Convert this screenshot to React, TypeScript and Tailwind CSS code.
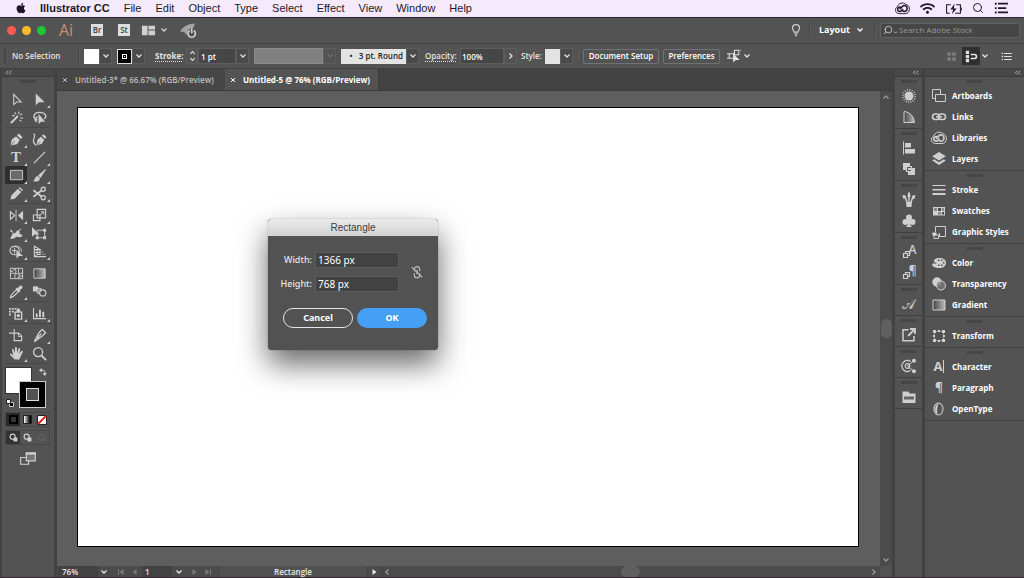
import type { ReactNode } from "react";
import { FaApple, FaWifi } from "react-icons/fa";
import { Search } from "lucide-react";

const line = { fill: "none", stroke: "currentColor" };

const icons: Record<string, ReactNode> = {
  select: <path d="M5 2.5v11l3-2.800h5z" {...line} strokeWidth="1.100" />,
  direct: <path d="M4 1.500v12.500l3.500-3.200h6z" />,
  wand: (
    <>
      <path d="M2 14 9.500 6.500" {...line} strokeWidth="2.200" />
      <path d="M10.500 1.500v3M14 4l-2 1.500M15 8.500h-3M6 2.500l1.500 2M13 12l-1.500-1.500M3.500 6h2.500" {...line} strokeWidth="1.200" />
    </>
  ),
  lasso: (
    <>
      <path d="M6 10.500C0 10 1 2.500 8 2.500s8 5 5 7M6 7.500c-2.500 0-3.500 4.500-1 5" {...line} strokeWidth="1.500" />
      <path d="M7 4v11l2.700-2.600H14z" />
    </>
  ),
  pen: (
    <>
      <path d="M1.500 14.500 3 8 7.500 4.500l4 4L8.500 13z" />
      <path d="M8.500 3.500 10.500 1.500l4 4L12.500 7.500z" />
      <path d="M2 14 6 10" stroke="#535353" strokeWidth=".8" />
    </>
  ),
  curve: (
    <>
      <path d="M4.500 14.500 6 8 9.500 5l3.500 3.500L10.500 12.500z" />
      <path d="M10.500 4 12.200 2.300l3.300 3.300L13.800 7.300z" />
      <path d="M1.500 2c3 1 0 4.500 0 7s1 4 3 5" {...line} strokeWidth="1.300" />
      <path d="M5 14 8.500 10.500" stroke="#535353" strokeWidth=".8" />
    </>
  ),
  segment: <path d="M2 14 14 2" {...line} strokeWidth="1.300" />,
  rect: <path d="M1.500 2.500h13v10h-13z" stroke="currentColor" fill="#6a6a6a" />,
  brush: (
    <>
      <path d="M14.500 1.500 7 8l2 2z" stroke="currentColor" />
      <path d="M6.200 8.500 8.500 10.800C8 14.500 4.500 15 1 14.200c2.500-1 1.500-5.200 5.200-5.700z" />
    </>
  ),
  pencil: <path d="m1.500 14.500 1-4.500 7-7 3.500 3.500-7 7zM10.500 2l1-1 3.500 3.500-1 1z" />,
  scissors: (
    <>
      <circle cx="12" cy="3.500" r="2.200" {...line} strokeWidth="1.400" />
      <circle cx="12" cy="12.500" r="2.200" {...line} strokeWidth="1.400" />
      <path d="M10.500 11.500 1.500 4.500M10.500 4.500l-9 7" {...line} strokeWidth="1.800" />
    </>
  ),
  reflect: (
    <>
      <path d="M1.500 4v8l4.500-4z" {...line} strokeWidth="1.200" />
      <path d="M15 3v10L9.500 8z" />
      <path d="M7.500 2v12" {...line} />
    </>
  ),
  scale: (
    <>
      <path d="M5.500 1.500h9v9h-9zM1.500 7.500h7v6h-7z" {...line} strokeWidth="1.200" />
      <path d="M8 8 12.500 4M9.500 4h3v3" {...line} />
    </>
  ),
  width: (
    <>
      <path d="M1.500 4c3 0 2 4 4 4s3-5 5-3-1 4 3.500 4v2c-4 2.500-5-1-7 1s-4.500 2-6 1c2-1 1.500-3 2.500-4S4 6 1.500 6z" />
      <path d="M2 12 13 3" stroke="currentColor" />
    </>
  ),
  free: (
    <>
      <path d="M5.500 4.500h8v8h-8z" {...line} />
      <path d="M12 3h3v3h-3zM12 11h3v3h-3zM4 11h3v3H4z" />
      <path d="M0 1v10.500L3 9h5z" />
    </>
  ),
  shape: (
    <>
      <ellipse cx="6" cy="7" rx="5" ry="4.500" {...line} strokeWidth="1.200" />
      <path d="M6 2.500c4.500-1 8 2 7 6M3 7h5M6 4v6" {...line} />
      <path d="M8 6v9.500l2.700-2.600H15z" />
    </>
  ),
  perspective: (
    <>
      <path d="M2.500 1.500v12H15M2.500 2.500 8.500 6v5l-6 1M2.500 6h6M2.500 9h6M5.500 4v8" {...line} strokeWidth="1.200" />
      <path d="M9 8.500h3M9 11h5M9 6h2" {...line} strokeDasharray="1 1" />
    </>
  ),
  mesh: <path d="M1.500 2.500h13v11h-13zM1.500 9c4-4 7 2 13-2M6 2.500c4 4-2 7 1 11M10.500 2.500c-2 4 2 7 0 11M1.500 6c3 0 4-2 5-3.500M9 13.500c1-2 3-3 5.500-3" {...line} />,
  gradient: <path d="M2 3h12v10H2z" fill="url(#ramp)" stroke="currentColor" />,
  eyedropper: (
    <>
      <path d="M1.500 14.500c0-2 1-3.500 6.500-8.500L10 8c-5 5.500-6.500 6.500-8.500 6.500z" {...line} strokeWidth="1.200" />
      <path d="m7 5 4 4 1.200-1.200-.7-.8L14 4.500C15.500 2.500 13 .5 11.500 2L9 4.500l-.8-.7z" />
    </>
  ),
  blend: (
    <>
      <path d="M1 2.500h5.500v5.500H1z" />
      <circle cx="8" cy="7.500" r="3" fill="#999" stroke="currentColor" />
      <circle cx="11.500" cy="9.500" r="3.300" fill="#535353" stroke="currentColor" strokeWidth="1.200" />
    </>
  ),
  spray: (
    <>
      <path d="M0 2h2v2H0zM3 2h2v2H3zM6 2h2v2H6zM0 5h2v2H0zM3 5h2v2H3zM0 8h2v2H0z" />
      <path d="M6.500 6.500h7v7.500h-7zM8 5h4M8.500 3.500h3" {...line} strokeWidth="1.500" />
      <circle cx="10" cy="10.200" r="1.800" />
    </>
  ),
  graph: <path d="M1 2h1.200v10.800H15V14H1zM4 8h2v4H4zM7.500 4h2v8h-2zM11 6h2v6h-2z" />,
  artboardTool: (
    <>
      <path d="M5.500 1v4M0 5.500h5M5.500 5.500h5l3 3v5h-8z" {...line} strokeWidth="1.200" />
      <path d="M10 5.500v3.500h3.500" {...line} />
    </>
  ),
  slice: <path d="M2.500 14.500 7.500 5 11 1.500 14.500 5 11 8.500zM5.500 11l4.500-5" {...line} strokeWidth="1.400" />,
  hand: <path d="M6 14.500 1.300 9.700c-.9-1.200.6-2 1.500-1.200L4.500 9.800 3.300 4.500c-.3-1.400 1.400-1.700 1.800-.4l1.100 3.400L6.400 2.200c0-1.400 1.900-1.400 2 0l.2 5.200 1.500-4.400c.5-1.300 2-.8 1.800.4l-1 4.900 2.100-2.600c1-1.100 2.200-.2 1.600.9L12.500 11 11 14.500z" />,
  zoom: (
    <>
      <circle cx="6.500" cy="6.500" r="4.800" {...line} strokeWidth="1.400" />
      <path d="m10 10 5 5" stroke="currentColor" strokeWidth="2" />
    </>
  ),
  sun: (
    <>
      <circle cx="8" cy="8" r="4.500" />
      <circle cx="8" cy="8" r="6.200" {...line} strokeWidth="1.500" strokeDasharray="1 1.400" />
    </>
  ),
  guide: <path d="M3 2.500C9 3 13 7.500 13.500 13.500H3z" fill="url(#ramp)" stroke="currentColor" />,
  align: <path d="M2 1.500h1v13H2zM4 3h6v4.500H4zM4 9h10v4.500H4z" />,
  pathfinder: (
    <>
      <path d="M2 2h7v3H5v4H2z" />
      <path d="M7 7h7v7H7V11h3V9H7z" />
      <path d="M5.500 5.500h5v5h-5z" {...line} strokeWidth="1.200" />
    </>
  ),
  brushes: (
    <>
      <path d="M6 10 4 5M8 9V3M10 10l2-5" stroke="currentColor" strokeWidth="1.500" />
      <path d="M2 6.500 1.500 3l3 .5 1 3zM6.500 5 7 .500h2L9.500 5zM10.500 6.500l1-3 3-.5-1 4z" />
      <path d="M5 9.500h6l-.5 5.500h-5z" />
    </>
  ),
  club: (
    <>
      <circle cx="8" cy="4.500" r="3" />
      <circle cx="4.500" cy="9" r="3" />
      <circle cx="11.500" cy="9" r="3" />
      <path d="M7 7h2l.2 5 2 2H4.800l2-2z" />
    </>
  ),
  styleBox: <path d="M2.500 9.500h4v4h-4zM4.500 9V7.500h4v4H7" {...line} strokeWidth="1.200" />,
  share: (
    <>
      <path d="M7.500 2.700H2v11h11V9" {...line} strokeWidth="1.500" />
      <path d="m7 9 6.500-6.500M9 2h5v5" {...line} strokeWidth="1.800" />
    </>
  ),
  target: (
    <>
      <path d="M9.500 3.500a5.500 5.500 0 1 0 0 9" {...line} strokeWidth="1.400" />
      <circle cx="6.500" cy="8" r="2.300" {...line} strokeWidth="1.200" />
      <path d="M6.500 8 13 2.500M6.500 8l6.500 5.500" stroke="currentColor" />
      <circle cx="13" cy="2.800" r="2" />
      <circle cx="13" cy="13.200" r="2" />
    </>
  ),
  folder: (
    <>
      <path d="M1.500 2.500h6l1 2h6v9.500h-13z" />
      <path d="M3 7.500h10v3H3z" fill="#666" />
    </>
  ),
  artboards: (
    <>
      <path d="M1.500 1.500h8v9h-8z" {...line} />
      <path d="M4.500 6.500h10v7h-10z" fill="#535353" stroke="currentColor" />
    </>
  ),
  links: (
    <>
      <rect x="1.500" y="5" width="7" height="5.500" rx="2.700" {...line} strokeWidth="1.600" />
      <rect x="7.500" y="5" width="7" height="5.500" rx="2.700" {...line} strokeWidth="1.600" />
      <path d="M5 7.800h6" stroke="currentColor" strokeWidth="1.500" />
    </>
  ),
  cloud: (
    <>
      <path d="M4.500 13.500C-.5 13-.5 7.500 2.500 6.500 3.500 2 9 1 11.500 3.500c5.500 1 5 10-.5 10z" {...line} />
      <path d="M8 10.200c1.500 1.800 5 1 5-2.200s-3.500-4-5.200-2.200L5 8.800" {...line} strokeWidth="1.700" />
      <path d="M8.500 8.500 6.800 10.600c-1.300 1.100-4 .6-4-1.600S5 6 6.500 7" {...line} strokeWidth="1.700" />
    </>
  ),
  layers: (
    <>
      <path d="m8 1 6.800 4.200L8 9.500 1.200 5.200z" />
      <path d="m1.200 9.500 2-1.300L8 11.200l4.800-3 2 1.300L8 14z" />
    </>
  ),
  strokes: <path d="M1.500 3h13v1h-13zM1.500 7h13v1.500h-13zM1.500 11h13v2h-13z" />,
  swatches: (
    <>
      <path d="M2 4h12v8.500H2z" />
      <path d="M3 5h3v3H3zM7 9h3v2.500H7zM11 5h2v3h-2z" fill="#888" />
      <path d="M7 5h3v3H7zM11 9h2v2.500h-2z" fill="#4a4a4a" />
    </>
  ),
  styles: (
    <>
      <path d="M4.500 8V2.500h10v10H8" {...line} />
      <path d="M1.500 8.500h4v3h-4z" fill="#ddd" />
      <path d="M3 11h4.500v3.500H3zM8.500 9v4" {...line} />
    </>
  ),
  palette: (
    <>
      <path d="M8.500 3c4 0 6.500 1.800 6.500 4.900 0 3-3 5.100-6.500 5.100C4 13 1 11.500 1.200 9.500 1.800 7.500 5 9.500 5.500 8.500 6 7.500 2 7.500 3 5.500 3.800 3.500 6 3 8.500 3z" />
      <path d="M7 4.500h1.500V6H7zM10 4.500h1.500V6H10zM12 7h1.500v1.500H12zM10 9.500h1.500V11H10zM7 9.500h1.500V11H7z" fill="#535353" />
    </>
  ),
  transparency: (
    <>
      <circle cx="6" cy="6" r="4.700" />
      <circle cx="10" cy="9.500" r="4.500" fill="#777" fillOpacity=".8" stroke="currentColor" />
    </>
  ),
  transform: (
    <>
      <path d="M3.500 3.500h9v9h-9z" {...line} strokeDasharray="1 1" />
      <path d="M2 2h3v3H2zM11 2h3v3h-3zM2 11h3v3H2zM11 11h3v3h-3zM7 2h2v2H7zM7 12h2v2H7zM2 7h2v2H2zM12 7h2v2h-2z" />
    </>
  ),
  opentype: (
    <>
      <ellipse cx="7.500" cy="8" rx="4.500" ry="6" {...line} strokeWidth="1.200" />
      <path d="M8 2.500C3 4 3 12 7 13.500 5.500 11 6 5 8 2.500z" />
      <path d="M9 2.500c2.500 3 2 8 0 11 4-2 4-9.500 0-11z" fill="#909090" />
    </>
  ),
  arrange: <path d="M1 3h6v10H1zM8 3h7v4H8zM8 8h7v5H8z" />,
  rocket: (
    <>
      <path d="M0 9C4 3 9 2 14 1.500 13 5 11 9 6 12L4 9.500z" fill="#a5a5a5" />
      <circle cx="11" cy="10.500" r="4.500" fill="#535353" />
      <path d="M9 8a3.500 3.500 0 1 0 4 0M11 6v4.500" {...line} strokeWidth="1.600" />
    </>
  ),
  bulb: <path d="M6 10.500C6 9 4 8.500 4 5.800a4 4 0 0 1 8 0C12 8.500 10 9 10 10.500zM6.200 12.500h3.600M7 14.500h2" {...line} strokeWidth="1.400" />,
  isolate: (
    <>
      <path d="M2.500 5.500h6v5h-6zM8.500 1.500h5v5h-5zM0 5.500h2M0 10.500h7M15 1.500h1" {...line} strokeWidth="1.200" />
      <path d="M7 5v10.500l3-2.800h4.500z" />
    </>
  ),
  grid4: <path d="M2 2h5v5H2zM9 2h5v5H9zM2 9h5v5H2zM9 9h5v5H9z" />,
  dock: (
    <>
      <path d="M1 1h4v4H1zM1 6h4v4H1zM1 11h4v4H1z" />
      <path d="M7 5.500h4.500c3.500 0 3.500 5 0 5H7" {...line} strokeWidth="2" />
    </>
  ),
  list: <path d="M1 2.500h2v2H1zM1 7h2v2H1zM1 11.500h2v2H1zM4.500 3h11v1.300h-11zM4.500 7.300h11v1.300h-11zM4.500 11.700h11V13h-11z" />,
  menuList: <path d="M1 2h2v2.200H1zM1 7h2v2.200H1zM1 12h2v2.200H1zM4.500 2H16v2H4.500zM4.500 7H14v2H4.500zM4.500 12H16v2H4.500z" />,
  screens: (
    <>
      <path d="M1.500 7.500h7v6h-7z" {...line} />
      <path d="M6.500 3.500h8v7h-8z" fill="#777" stroke="currentColor" />
      <path d="M6 3h9v2H6z" />
    </>
  ),
  drawMode: (
    <>
      <circle cx="6.500" cy="6.500" r="4.500" {...line} strokeWidth="2" />
      <path d="M8 8h7v7H8z" />
    </>
  ),
  drawInside: <circle cx="8" cy="8" r="5" {...line} strokeWidth="1.500" strokeDasharray="2 1" />,
  swap: (
    <>
      <path d="M4 4.500h4c2.500 0 3.500 1 3.500 3.500v4" {...line} strokeWidth="2" />
      <path d="M0 4.500 5.500 0v9zM11.500 16 7 10.500h9z" />
    </>
  ),
  battery: (
    <>
      <path d="M5.500 4.500H1.500v8h3M10.500 4.500h4v8H9.500M15.800 7v3" {...line} />
      <path d="M9 3.500 5 9h2.700L6.500 13.500 11 8H8.300z" />
    </>
  ),
  unlink: (
    <>
      <path d="M5 7V4.500C5 1 11 1 11 4.500V7M5 9.500V12c0 3.500 6 3.500 6 0V9.500M8 5.500v5" {...line} strokeWidth="1.300" />
      <path d="M2 2.500 14 14" {...line} strokeWidth="1.300" />
    </>
  ),
};

function Icon({ name, className = "size-4" }: { name: string; className?: string }) {
  return (
    <svg viewBox="0 0 16 16" fill="currentColor" className={`shrink-0 ${className}`} aria-hidden="true">
      {icons[name]}
    </svg>
  );
}

function Chevron({ className = "size-2" }: { className?: string }) {
  return (
    <svg viewBox="0 0 8 8" className={`shrink-0 ${className}`} aria-hidden="true">
      <path d="m1.500 2.500 2.500 2.500 2.500-2.500" fill="none" stroke="currentColor" strokeWidth="1.300" />
    </svg>
  );
}

function DropButton({ label, muted = false }: { label: string; muted?: boolean }) {
  return (
    <button
      aria-label={label}
      className={`flex h-4 w-[13px] shrink-0 items-center justify-center border border-[#5d5d5d] ${muted ? "text-[#6d6d6d]" : "bg-[#4a4a4a] text-[#e0e0e0]"}`}
    >
      <Chevron />
    </button>
  );
}

function Divider() {
  return <span className="h-4 w-[2px] shrink-0 border-r border-[#5c5c5c] bg-[#474747]" />;
}

const menus = ["File", "Edit", "Object", "Type", "Select", "Effect", "View", "Window", "Help"];

function MenuBar() {
  return (
    <nav className="flex h-[17px] shrink-0 items-center bg-[#f5eafb] pr-4 pb-px pl-[15px] font-['Liberation_Sans',sans-serif] text-[11px] leading-[14px] text-[#1d1826]">
      <FaApple className="mr-[13px] size-3" />
      <div className="flex gap-[14px]">
        <button className="font-bold">Illustrator CC</button>
        {menus.map((m) => (
          <button key={m}>{m}</button>
        ))}
      </div>
      <div className="ml-auto flex items-center gap-[10px]">
        <Icon name="cloud" className="size-[15px]" />
        <FaWifi className="size-[15px]" />
        <Icon name="battery" className="size-[17px]" />
        <Search className="size-3" />
        <Icon name="menuList" className="size-[14px]" />
      </div>
    </nav>
  );
}

function TitleBar() {
  return (
    <header className="flex h-[27px] shrink-0 items-center border-t border-b border-t-[#30263a] border-b-[#424242] pr-1 pb-px pl-[7px] text-[#d0d0d0]">
      <div className="flex gap-[6px]">
        <button aria-label="Close" className="size-[9px] rounded-full bg-[#fb5a52]" />
        <button aria-label="Minimize" className="size-[9px] rounded-full bg-[#fdb92a]" />
        <button aria-label="Full screen" className="size-[9px] rounded-full bg-[#1ec736]" />
      </div>
      <span className="ml-[13px] w-8 text-[16px] leading-4 text-[#c98f6d]">Ai</span>
      <div className="flex items-center gap-[15px] text-[8px] leading-3 font-semibold text-[#444]">
        <button className="size-3 bg-[#dedede]">Br</button>
        <button className="size-3 bg-[#dedede]">St</button>
      </div>
      <button aria-label="Arrange documents" className="ml-[11px] flex items-center gap-1">
        <Icon name="arrange" className="size-[15px]" />
        <Chevron />
      </button>
      <button aria-label="GPU performance" className="ml-3">
        <Icon name="rocket" className="size-[17px]" />
      </button>
      <div className="ml-auto flex items-center">
        <button aria-label="Learn" className="mr-[6px]">
          <Icon name="bulb" className="size-[14px]" />
        </button>
        <Divider />
        <button className="mr-[10px] ml-2 flex items-center gap-[6px] text-[9px] leading-3 font-bold text-white">
          Layout
          <Chevron />
        </button>
        <Divider />
        <label className="ml-1 flex h-[15px] w-[140px] items-center rounded-[2px] border border-[#616161] bg-[#464646] pl-[2px]">
          <Search className="size-[10px] shrink-0 -scale-x-100" />
          <Chevron className="mt-1 size-[5px]" />
          <input
            aria-label="Search Adobe Stock"
            placeholder="Search Adobe Stock"
            className="w-full min-w-0 bg-transparent pl-px text-[8px] leading-3 outline-none placeholder:text-[#969696]"
          />
        </label>
      </div>
    </header>
  );
}

function ControlBar() {
  return (
    <div className="flex h-[25px] shrink-0 items-center border-b border-[#424242] pr-3 pl-1 text-[8px] leading-3 text-[#e2e2e2]">
      <span className="h-4 w-[2px] bg-[#474747]" />
      <span className="ml-[6px] w-[66px] font-semibold">No Selection</span>
      <Divider />
      <button aria-label="Fill" className="ml-1 size-[15px] bg-white" />
      <DropButton label="Fill options" />
      <button aria-label="Stroke color" className="ml-[5px] flex size-[15px] items-center justify-center border border-[#ddd] bg-black">
        <span className="flex size-[5px] items-center justify-center border border-white">
          <span className="size-px bg-white" />
        </span>
      </button>
      <DropButton label="Stroke options" />
      <label htmlFor="stroke" className="ml-[10px] w-[31px] font-bold underline decoration-dotted underline-offset-2">Stroke:</label>
      <button aria-label="Stroke weight step" className="flex h-4 w-3 flex-col items-center justify-center border border-[#5d5d5d]">
        <Chevron className="size-[7px] rotate-180" />
        <Chevron className="size-[7px]" />
      </button>
      <input id="stroke" defaultValue="1 pt" className="h-4 w-[38px] border border-[#5d5d5d] bg-[#464646] pl-[2px] font-semibold text-white" />
      <DropButton label="Stroke weights" />
      <button aria-label="Variable width profile" className="ml-[5px] h-4 w-[69px] border border-[#8a8a8a] bg-[#7f7f7f]" />
      <DropButton label="Width profiles" muted />
      <select aria-label="Brush" className="ml-[5px] h-[15px] w-[65px] appearance-none bg-[#e3e3e3] pr-[3px] text-right font-semibold text-[#222]">
        <option>•&nbsp;&nbsp; 3 pt. Round</option>
      </select>
      <DropButton label="Brushes" />
      <label htmlFor="opacity" className="ml-[6px] w-[35px] font-semibold underline decoration-dotted underline-offset-2">Opacity:</label>
      <input id="opacity" defaultValue="100%" className="h-4 w-[44px] border border-[#5d5d5d] bg-[#464646] pl-px font-semibold text-white" />
      <button aria-label="Opacity slider" className="flex h-4 w-[13px] items-center justify-center border border-[#5d5d5d]">
        <Chevron className="size-2 -rotate-90" />
      </button>
      <span className="ml-1 w-6 font-semibold">Style:</span>
      <button aria-label="Graphic style" className="size-[15px] bg-[#e3e3e3]" />
      <DropButton label="Graphic styles" />
      <span className="ml-[5px]"><Divider /></span>
      <button className="ml-1 h-[15px] w-[76px] shrink-0 rounded-[2px] border border-[#727272] font-semibold whitespace-nowrap text-white">Document Setup</button>
      <button className="ml-1 h-[15px] w-[57px] shrink-0 rounded-[2px] border border-[#727272] font-semibold text-white">Preferences</button>
      <button aria-label="Select similar objects" className="ml-[7px] flex items-center gap-[2px]">
        <Icon name="isolate" className="size-[14px]" />
        <Chevron />
      </button>
      <div className="ml-auto flex items-center">
        <button aria-label="Grid" className="mr-[5px] text-[#7d7d7d]"><Icon name="grid4" className="size-[11px]" /></button>
        <button aria-label="Dock" className="flex h-[18px] w-[18px] items-center justify-center bg-[#2f2f2f]"><Icon name="dock" className="size-[13px]" /></button>
        <Chevron className="ml-px size-2" />
        <button aria-label="Panel menu" className="ml-3"><Icon name="list" className="size-[11px]" /></button>
      </div>
    </div>
  );
}

const toolGroups = [
  ["select", "direct", "wand", "lasso"],
  ["pen", "curve", "type", "segment", "rect", "brush", "pencil", "scissors"],
  ["reflect", "scale", "width", "free", "shape", "perspective"],
  ["mesh", "gradient", "eyedropper", "blend"],
  ["spray", "graph"],
  ["artboardTool", "slice", "hand", "zoom"],
];
const singleTools = ["select", "wand", "lasso", "curve", "free", "mesh", "gradient", "blend", "artboardTool", "zoom"];

function Tool({ name }: { name: string }) {
  return (
    <button
      aria-label={name}
      className={`relative flex h-[18px] w-[22px] items-center justify-center ${name === "rect" ? "rounded-[2px] bg-[#2f2f2f]" : ""}`}
    >
      {name === "type" ? (
        <span className="font-['Liberation_Serif',serif] text-[15px] leading-4 font-bold">T</span>
      ) : (
        <Icon name={name} className="size-[15px]" />
      )}
      {!singleTools.includes(name) && (
        <span className="absolute right-0 bottom-0 size-0 border-b-[3px] border-l-[3px] border-b-[#d0d0d0] border-l-transparent" />
      )}
    </button>
  );
}

function Collapse() {
  return (
    <svg viewBox="0 0 8 8" className="size-[7px] text-[#c4c4c4]" aria-hidden="true">
      <path d="M3.500 2 1.500 4l2 2M7 2 5 4l2 2" fill="none" stroke="currentColor" />
    </svg>
  );
}

function PanelHeader({ className = "" }: { className?: string }) {
  return (
    <div className={`flex h-2 shrink-0 items-center border-b border-[#3c3c3c] bg-[#484848] px-[3px] ${className}`}>
      <Collapse />
    </div>
  );
}

function Grip({ className = "" }: { className?: string }) {
  return <div className={`h-[3px] w-4 bg-[repeating-linear-gradient(90deg,#414141_0_1px,#4b4b4b_1px_2px)] ${className}`} />;
}

function Toolbar() {
  return (
    <aside className="flex w-[52px] shrink-0 flex-col bg-[#535353] text-[#cfcfcf]">
      <PanelHeader />
      <Grip className="mx-auto mt-[3px] mb-1" />
      {toolGroups.map((group, i) => (
        <div
          key={i}
          className={`mx-[3px] mb-px grid grid-cols-2 border-t pt-[2px] ${i === 0 ? "border-transparent" : "border-[#484848]"}`}
        >
          {group.map((t) => (
            <Tool key={t} name={t} />
          ))}
        </div>
      ))}
      <div className="relative mx-[3px] h-[46px] border-t border-[#484848]">
        <button aria-label="Fill color" className="absolute top-[3px] left-0 size-[27px] border border-[#333] bg-white" />
        <button aria-label="Stroke swatch" className="absolute top-[17px] left-[14px] flex size-[27px] items-center justify-center border border-[#ccc] bg-black">
          <span className="size-[13px] border border-[#ddd] bg-[#535353]" />
        </button>
        <button aria-label="Swap fill and stroke" className="absolute top-[4px] left-[34px]">
          <Icon name="swap" className="size-2" />
        </button>
        <button aria-label="Default fill and stroke" className="absolute top-[35px] left-[1px]">
          <svg viewBox="0 0 8 8" className="size-2">
            <path d="M3.500 3.500h4v4h-4z" fill="#000" stroke="#ccc" />
            <path d="M.5.5h4v4h-4z" fill="#fff" stroke="#222" />
          </svg>
        </button>
      </div>
      <div className="mx-[3px] mt-[3px] grid w-[45px] grid-cols-3 border border-[#484848]">
        <button aria-label="Color" className="flex h-[13px] items-center justify-center bg-[#2a2a2a]">
          <span className="size-[9px] border-2 border-black bg-[#333]" />
        </button>
        <button aria-label="Gradient fill" className="flex h-[13px] items-center justify-center">
          <span className="size-[9px] border border-[#222] bg-linear-to-r from-white to-black" />
        </button>
        <button aria-label="None" className="flex h-[13px] items-center justify-center">
          <svg viewBox="0 0 10 10" className="size-[10px]">
            <path d="M.5.5h9v9h-9z" fill="#fff" stroke="#222" />
            <path d="m1 9 8-8" stroke="#e3221b" strokeWidth="2" />
          </svg>
        </button>
      </div>
      <div className="mx-[3px] mt-[3px] grid w-[45px] grid-cols-3 border border-[#484848]">
        <button aria-label="Draw normal" className="flex h-[13px] items-center justify-center bg-[#333]"><Icon name="drawMode" className="size-[9px]" /></button>
        <button aria-label="Draw behind" className="flex h-[13px] items-center justify-center"><Icon name="drawMode" className="size-[9px]" /></button>
        <button aria-label="Draw inside" className="flex h-[13px] items-center justify-center text-[#777]"><Icon name="drawInside" className="size-[9px]" /></button>
      </div>
      <button aria-label="Change screen mode" className="mx-auto mt-1"><Icon name="screens" className="size-[18px]" /></button>
    </aside>
  );
}

function Dialog() {
  return (
    <form
      role="dialog"
      aria-label="Rectangle"
      onSubmit={(e) => e.preventDefault()}
      className="absolute top-[111px] left-[190px] w-[170px] overflow-hidden rounded-[4px] bg-[#525252] font-['Noto_Sans',sans-serif] text-[9px] leading-3 text-[#e6e6e6] shadow-[0_14px_30px_rgba(0,0,0,0.6),0_0_1px_rgba(0,0,0,0.6)]"
    >
      <h2 className="h-[17px] bg-linear-to-b from-[#ebebeb] to-[#d2d2d2] text-center font-['Liberation_Sans',sans-serif] text-[10px] leading-[17px] text-[#404040]">
        Rectangle
      </h2>
      <div className="flex items-center pt-4 pl-2">
        <div className="flex flex-col gap-2">
          <div className="flex items-center gap-[3px]">
            <label htmlFor="w" className="w-9 text-right font-medium">Width:</label>
            <input id="w" defaultValue="1366 px" className="h-4 w-[84px] border border-[#5c5c5c] bg-[#424242] pl-[2px] text-[10px] text-white" />
          </div>
          <div className="flex items-center gap-[3px]">
            <label htmlFor="h" className="w-9 text-right font-medium">Height:</label>
            <input id="h" defaultValue="768 px" className="h-4 w-[84px] border border-[#5c5c5c] bg-[#424242] pl-[2px] text-[10px] text-white" />
          </div>
        </div>
        <button type="button" aria-label="Constrain proportions" className="ml-[11px] text-[#bdbdbd]">
          <Icon name="unlink" className="size-[14px]" />
        </button>
      </div>
      <div className="flex gap-1 pt-4 pb-[22px] pl-[15px] font-bold text-white">
        <button type="button" className="h-5 w-[70px] rounded-full border border-[#e6e6e6]">Cancel</button>
        <button className="h-5 w-[70px] rounded-full bg-[#449ff5]">OK</button>
      </div>
    </form>
  );
}

function StepIcon({ first = false, flip = false }: { first?: boolean; flip?: boolean }) {
  return (
    <svg viewBox="0 0 8 8" fill="currentColor" className={`size-2 ${flip ? "-scale-x-100" : ""}`} aria-hidden="true">
      <path d="M6.500 1v6L2.500 4z" />
      {first && <path d="M1 1h1v6H1z" />}
    </svg>
  );
}

function StatusBar() {
  return (
    <footer className="flex h-[11px] shrink-0 items-center bg-[#4b4b4b] pl-px text-[8px] leading-3 text-[#e8e8e8]">
      <select aria-label="Zoom" className="h-[11px] w-[40px] appearance-none bg-[#424242] pl-1 font-semibold">
        <option>76%</option>
      </select>
      <Chevron className="ml-[2px] size-2" />
      <div className="ml-[9px] flex w-[22px] gap-[5px] text-[#7a7a7a]">
        <StepIcon first />
        <StepIcon />
      </div>
      <select aria-label="Artboard" className="ml-[3px] h-[11px] w-[30px] appearance-none bg-[#424242] pl-[3px] font-semibold">
        <option>1</option>
      </select>
      <Chevron className="ml-[3px] size-2" />
      <div className="ml-2 flex w-[24px] flex-row-reverse justify-end gap-[5px] text-[#7a7a7a]">
        <StepIcon first flip />
        <StepIcon flip />
      </div>
      <span className="ml-[3px] h-[11px] w-[150px] border-x border-[#454545] bg-[#505050] text-center font-semibold">Rectangle</span>
      <button aria-label="Status menu" className="flex w-[14px] justify-center"><StepIcon flip /></button>
      <div className="flex h-[11px] flex-1 items-center justify-between border-l border-[#424242] text-[#999]">
        <Chevron className="size-2 rotate-90" />
        <span className="h-[11px] w-[19px] rounded-full bg-[#5f5f5f]" />
        <Chevron className="mr-[2px] size-2 -rotate-90" />
      </div>
      <span className="h-[11px] w-3 bg-[#535353]" />
    </footer>
  );
}

function Close() {
  return (
    <svg viewBox="0 0 6 6" className="size-[6px] shrink-0" aria-hidden="true">
      <path d="m1 1 4 4M5 1 1 5" stroke="currentColor" />
    </svg>
  );
}

function DocumentArea() {
  return (
    <main className="flex min-w-0 flex-1 flex-col">
      <div role="tablist" className="flex h-[22px] shrink-0 items-stretch border-b border-[#3a3a3a] bg-[#424242] text-[8px] font-semibold">
        <button role="tab" aria-selected="false" className="flex w-[168px] items-center gap-[7px] bg-[#474747] pl-[5px] whitespace-nowrap text-[#bdbdbd]">
          <Close /> Untitled-3* @ 66.67% (RGB/Preview)
        </button>
        <button role="tab" aria-selected="true" className="flex w-[154px] items-center gap-[7px] border-r border-[#3a3a3a] bg-[#535353] pl-[5px] font-bold whitespace-nowrap text-white">
          <Close /> Untitled-5 @ 76% (RGB/Preview)
        </button>
      </div>
      <div className="flex min-h-0 flex-1">
        <div className="flex flex-1 bg-[#5e5e5e] pt-[16px] pr-[21px] pb-[19px] pl-5">
          <div className="relative flex-1 border border-black bg-white">
            <Dialog />
          </div>
        </div>
        <div className="flex w-3 shrink-0 flex-col items-center justify-between bg-[#4b4b4b] py-[2px] text-[#999]">
          <Chevron className="size-2 rotate-180" />
          <span className="h-[19px] w-[11px] rounded-full bg-[#606060]" />
          <Chevron />
        </div>
      </div>
      <StatusBar />
    </main>
  );
}

// the type panels use letters for their icons
function PanelIcon({ name }: { name: string }) {
  if (name === "charStyles" || name === "paraStyles") {
    return (
      <span className="relative flex size-4">
        <Icon name="styleBox" />
        <span className="absolute top-0 right-0 text-[12px] leading-[11px] font-semibold">
          {name === "charStyles" ? "A" : "¶"}
        </span>
      </span>
    );
  }
  if (name === "glyphs") {
    return <span className="text-center text-[14px] leading-4">𝒜</span>;
  }
  if (name === "character") {
    return (
      <span className="flex w-4 items-center justify-center">
        <span className="border-r border-current pr-px text-[13px] leading-[13px]">A</span>
      </span>
    );
  }
  if (name === "paragraph") {
    return <span className="w-4 text-center text-[12px] leading-4 font-bold">¶</span>;
  }
  return <Icon name={name} />;
}

const iconGroups = [
  ["sun", "guide"],
  ["align", "pathfinder"],
  ["brushes", "club"],
  ["charStyles", "paraStyles"],
  ["glyphs"],
  ["share"],
  ["target"],
  ["folder"],
];

const panelGroups = [
  [["artboards", "Artboards"], ["links", "Links"], ["cloud", "Libraries"], ["layers", "Layers"]],
  [["strokes", "Stroke"], ["swatches", "Swatches"], ["styles", "Graphic Styles"]],
  [["palette", "Color"], ["transparency", "Transparency"], ["gradient", "Gradient"]],
  [["transform", "Transform"]],
  [["character", "Character"], ["paragraph", "Paragraph"], ["opentype", "OpenType"]],
];

function PanelGroup({ children }: { children: ReactNode }) {
  return (
    <div className="flex flex-col border-b border-[#404040] pt-[3px] pb-px">
      <Grip className="mx-auto mb-[2px]" />
      {children}
    </div>
  );
}

function Panels() {
  return (
    <>
      <aside className="flex w-[27px] shrink-0 flex-col bg-[#535353] text-[#cfcfcf]">
        <PanelHeader className="justify-end" />
        {iconGroups.map((group, i) => (
          <PanelGroup key={i}>
            {group.map((name) => (
              <button key={name} aria-label={name} className="flex h-[21px] items-center justify-center">
                <PanelIcon name={name} />
              </button>
            ))}
          </PanelGroup>
        ))}
      </aside>
      <aside className="flex w-[99px] shrink-0 flex-col bg-[#535353] text-[#cfcfcf]">
        <PanelHeader className="justify-end" />
        {panelGroups.map((group, i) => (
          <PanelGroup key={i}>
            {group.map(([icon, label]) => (
              <button key={label} className="flex h-[21px] items-center gap-[5px] pl-[6px] text-[8px] leading-3 font-bold whitespace-nowrap text-white">
                <span className="flex text-[#cfcfcf]"><PanelIcon name={icon} /></span>
                {label}
              </button>
            ))}
          </PanelGroup>
        ))}
      </aside>
    </>
  );
}

export default function App() {
  return (
    <div className="flex min-h-screen flex-col bg-[#535353] font-['Open_Sans',sans-serif]">
      <svg className="absolute size-0" aria-hidden="true">
        <linearGradient id="ramp">
          <stop offset="0" stopColor="#444" />
          <stop offset="1" stopColor="#bbb" />
        </linearGradient>
      </svg>
      <MenuBar />
      <TitleBar />
      <ControlBar />
      <div className="flex flex-1 gap-[3px] border-b border-[#33292f] bg-[#424242] pl-[2px]">
        <Toolbar />
        <DocumentArea />
        <Panels />
      </div>
    </div>
  );
}
